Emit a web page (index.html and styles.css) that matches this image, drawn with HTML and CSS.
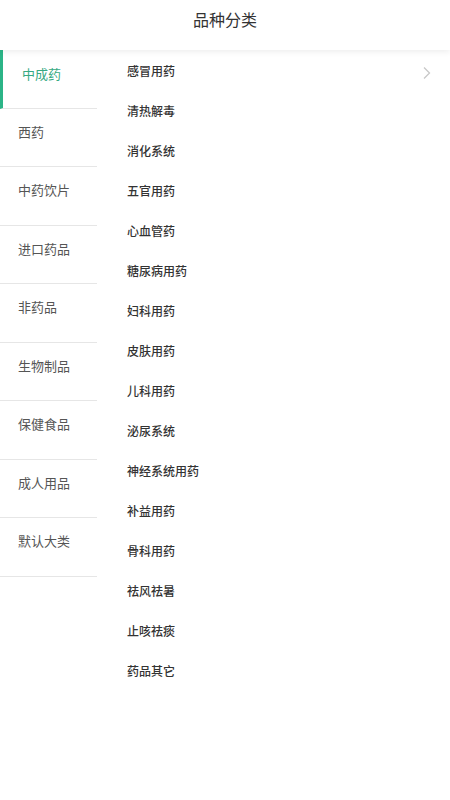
FILE: index.html
```html
<!DOCTYPE html>
<html lang="zh">
<head>
<meta charset="utf-8">
<title>品种分类</title>
<link rel="stylesheet" href="styles.css">
</head>
<body>
<header class="topbar">品种分类</header>
<main class="body">
  <nav class="side">
    <div class="side-item active">中成药</div>
    <div class="side-item">西药</div>
    <div class="side-item">中药饮片</div>
    <div class="side-item">进口药品</div>
    <div class="side-item">非药品</div>
    <div class="side-item">生物制品</div>
    <div class="side-item">保健食品</div>
    <div class="side-item">成人用品</div>
    <div class="side-item">默认大类</div>
  </nav>
  <section class="list">
    <div class="row"><span>感冒用药</span>
      <svg class="chev" width="10" height="14" viewBox="0 0 10 14"><path d="M2 1.5 L7.5 7 L2 12.5" fill="none" stroke="#c8c8c8" stroke-width="1.3"/></svg>
    </div>
    <div class="row"><span>清热解毒</span></div>
    <div class="row"><span>消化系统</span></div>
    <div class="row"><span>五官用药</span></div>
    <div class="row"><span>心血管药</span></div>
    <div class="row"><span>糖尿病用药</span></div>
    <div class="row"><span>妇科用药</span></div>
    <div class="row"><span>皮肤用药</span></div>
    <div class="row"><span>儿科用药</span></div>
    <div class="row"><span>泌尿系统</span></div>
    <div class="row"><span>神经系统用药</span></div>
    <div class="row"><span>补益用药</span></div>
    <div class="row"><span>骨科用药</span></div>
    <div class="row"><span>祛风祛暑</span></div>
    <div class="row"><span>止咳祛痰</span></div>
    <div class="row"><span>药品其它</span></div>
  </section>
</main>
</body>
</html>
```

FILE: styles.css
```css
* { box-sizing: border-box; }
html, body { margin: 0; padding: 0; background: #fff; }
body {
  width: 450px;
  height: 800px;
  font-family: "Noto Sans CJK SC", "Noto Sans", sans-serif;
  overflow: hidden;
}
.topbar {
  height: 50px;
  display: flex;
  align-items: flex-start;
  justify-content: center;
  padding-top: 7px;
  font-size: 16px;
  line-height: 24px;
  color: #333;
  position: relative;
  z-index: 2;
  box-shadow: 0 2px 6px rgba(0,0,0,0.07);
}
.body {
  display: flex;
}
.side {
  width: 97px;
  flex: none;
}
.side-item {
  height: 58.5px;
  border-bottom: 1px solid #e6e6e6;
  padding: 13px 0 0 18px;
  font-size: 13px;
  line-height: 20px;
  color: #555;
}
.side-item.active {
  color: #36a982;
  border-left: 3px solid #2bb487;
  padding-left: 19px;
  padding-top: 14px;
}
.list {
  flex: 1;
  padding-left: 30px;
  padding-right: 18px;
}
.row {
  height: 40px;
  display: flex;
  align-items: center;
  justify-content: space-between;
  font-size: 12px;
  font-weight: 500;
  color: #333;
}
.chev { margin-top: 6px; }
```
